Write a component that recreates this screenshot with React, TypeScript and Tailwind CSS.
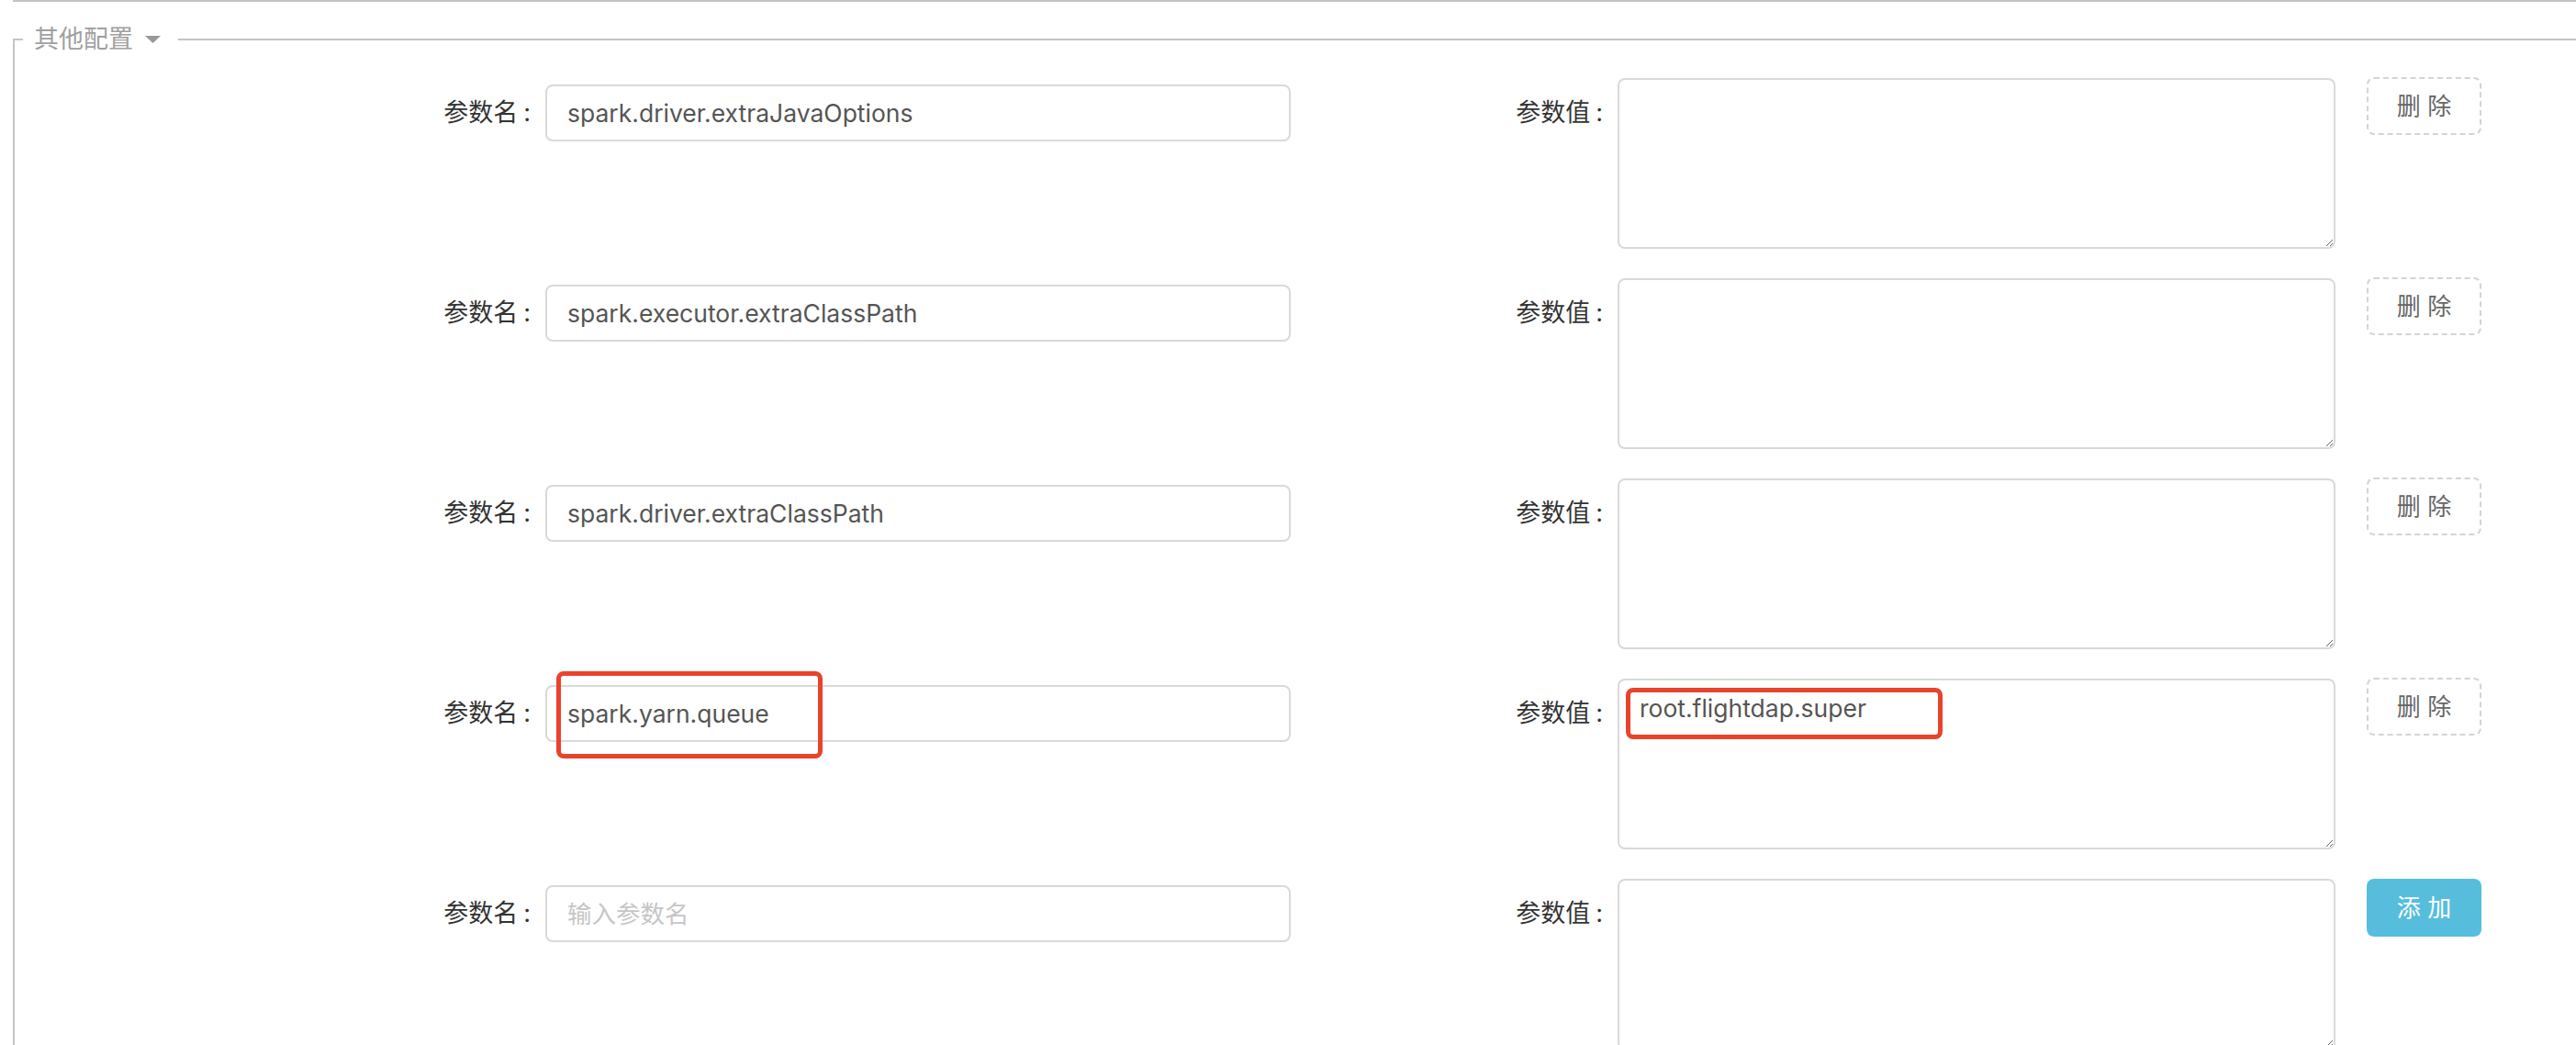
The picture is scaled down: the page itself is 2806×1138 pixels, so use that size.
import React from "react";

type Param = {
  name: string;
  value: string;
  markName?: boolean;
  markValue?: boolean;
};

const params: Param[] = [
  { name: "spark.driver.extraJavaOptions", value: "" },
  { name: "spark.executor.extraClassPath", value: "" },
  { name: "spark.driver.extraClassPath", value: "" },
  { name: "spark.yarn.queue", value: "root.flightdap.super", markName: true, markValue: true },
];

const font = "font-['Inter','Noto_Sans_CJK_SC',sans-serif]";

const Label = ({ text, width }: { text: string; width: string }) => (
  <div
    className={`${width} shrink-0 mt-[7px] h-[62px] leading-[62px] pr-[16px] text-right text-[27px] text-[#333]`}
  >
    {text}
    <span className="ml-[6px]">:</span>
  </div>
);

const ParamRow = ({ item, isNew }: { item?: Param; isNew?: boolean }) => (
  <div className="flex items-start">
    <Label text="参数名" width="w-[578px] pl-[398px]" />
    <div className="relative mt-[7px]">
      <input
        readOnly
        value={item ? item.name : ""}
        placeholder="输入参数名"
        className="w-[812px] h-[62px] border-2 border-[#d9d9d9] rounded-[8px] pl-[22px] text-[26.5px] text-[#555] placeholder:text-[#c6c6c6] outline-none"
      />
      {item?.markName && (
        <div className="absolute left-[12px] -top-[15px] w-[290px] h-[95px] border-[5px] border-[#e9432c] rounded-[8px]" />
      )}
    </div>
    <Label text="参数值" width="w-[356px]" />
    <div className="relative">
      <textarea
        readOnly
        value={item ? item.value : ""}
        className="block w-[782px] h-[186px] border-2 border-[#d9d9d9] rounded-[8px] pl-[22px] pt-[12px] leading-[36px] text-[26.5px] text-[#555] outline-none"
      />
      {item?.markValue && (
        <div className="absolute left-[9px] top-[10px] w-[345px] h-[56px] border-[5px] border-[#e9432c] rounded-[8px]" />
      )}
    </div>
    {isNew ? (
      <button className="ml-[34px] w-[125px] h-[63px] rounded-[8px] bg-[#56bedc] text-white text-[26px]">
        添 加
      </button>
    ) : (
      <button className="ml-[34px] -mt-px w-[125px] h-[63px] rounded-[8px] border-2 border-dashed border-[#d4d4d4] text-[#666] text-[26px]">
        删 除
      </button>
    )}
  </div>
);

export default function App() {
  return (
    <div className={`h-[1138px] overflow-hidden bg-white ${font}`}>
      {/* bottom edge of the previous section */}
      <div className="ml-[14px] h-[2px] bg-[#c4c4c4]" />

      <fieldset className="mt-[23px] ml-[14px] border-t-2 border-l-2 border-r-0 border-b-0 border-[#c4c4c4]">
        <legend className="ml-[9px] pl-[12px] pr-[19px] h-[36px] leading-[36px] text-[27px] text-[#a0a0a0]">
          <span className="inline-flex items-center">
            其他配置
            <svg width="17" height="8" viewBox="0 0 17 8" className="ml-[13px]">
              <path d="M0 0h17L8.5 8z" fill="#999" />
            </svg>
          </span>
        </legend>

        <div className="pt-[24px] flex flex-col gap-[32px]">
          {params.map((p) => (
            <ParamRow key={p.name} item={p} />
          ))}
          <ParamRow isNew />
        </div>
      </fieldset>
    </div>
  );
}
